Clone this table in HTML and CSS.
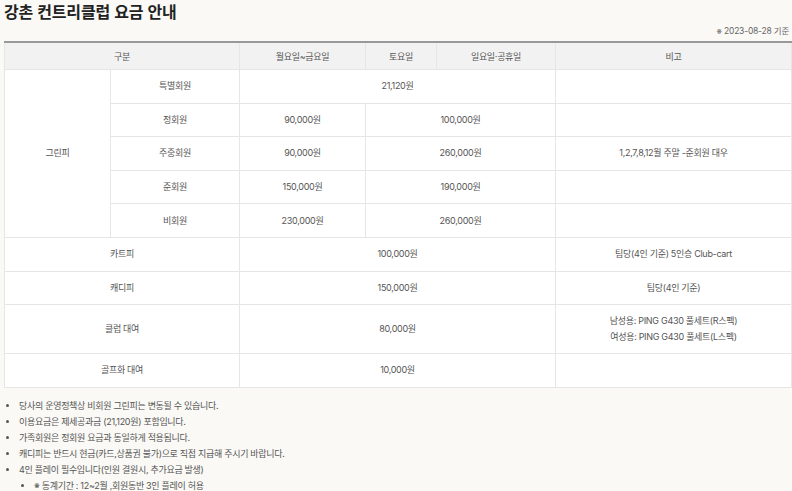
FILE: index.html
```html
<!DOCTYPE html>
<html lang="ko">
<head>
<meta charset="utf-8">
<title>강촌 컨트리클럽 요금 안내</title>
<link rel="stylesheet" href="styles.css">
</head>
<body>
<div class="page">
  <h1 class="title">강촌 컨트리클럽 요금 안내</h1>
  <p class="date">※ 2023-08-28 기준</p>
  <table class="fee">
    <colgroup>
      <col class="c1"><col class="c2"><col class="c3"><col class="c4"><col class="c5"><col class="c6">
    </colgroup>
    <thead>
      <tr>
        <th colspan="2">구분</th>
        <th>월요일~금요일</th>
        <th>토요일</th>
        <th>일요일·공휴일</th>
        <th>비고</th>
      </tr>
    </thead>
    <tbody>
      <tr>
        <td rowspan="5">그린피</td>
        <td>특별회원</td>
        <td colspan="3">21,120원</td>
        <td></td>
      </tr>
      <tr>
        <td>정회원</td>
        <td>90,000원</td>
        <td colspan="2">100,000원</td>
        <td></td>
      </tr>
      <tr>
        <td>주중회원</td>
        <td>90,000원</td>
        <td colspan="2">260,000원</td>
        <td>1,2,7,8,12월 주말 -준회원 대우</td>
      </tr>
      <tr>
        <td>준회원</td>
        <td>150,000원</td>
        <td colspan="2">190,000원</td>
        <td></td>
      </tr>
      <tr>
        <td>비회원</td>
        <td>230,000원</td>
        <td colspan="2">260,000원</td>
        <td></td>
      </tr>
      <tr>
        <td colspan="2">카트피</td>
        <td colspan="3">100,000원</td>
        <td>팀당(4인 기준) 5인승 Club-cart</td>
      </tr>
      <tr>
        <td colspan="2">캐디피</td>
        <td colspan="3">150,000원</td>
        <td>팀당(4인 기준)</td>
      </tr>
      <tr class="tall">
        <td colspan="2">클럽 대여</td>
        <td colspan="3">80,000원</td>
        <td>남성용: PING G430 풀세트(R스펙)<br>여성용: PING G430 풀세트(L스펙)</td>
      </tr>
      <tr>
        <td colspan="2">골프화 대여</td>
        <td colspan="3">10,000원</td>
        <td></td>
      </tr>
    </tbody>
  </table>
  <ul class="notes">
    <li>당사의 운영정책상 비회원 그린피는 변동될 수 있습니다.</li>
    <li>이용요금은 제세공과금 (21,120원) 포함입니다.</li>
    <li>가족회원은 정회원 요금과 동일하게 적용됩니다.</li>
    <li>캐디피는 반드시 현금(카드,상품권 불가)으로 직접 지급해 주시기 바랍니다.</li>
    <li>4인 플레이 필수입니다(인원 결원시, 추가요금 발생)
      <ul class="sub">
        <li>※ 동계기간 : 12~2월 ,회원동반 3인 플레이 허용</li>
      </ul>
    </li>
  </ul>
</div>
</body>
</html>
```

FILE: styles.css
```css
html, body {
  margin: 0;
  padding: 0;
  background: #faf9f6;
}
body {
  font-family: Inter, "Noto Sans CJK KR", "Noto Sans", sans-serif;
  color: #555;
}
.page {
  padding: 0 0 0 4px;
  width: 787px;
}
.title {
  margin: 0;
  padding-top: 1px;
  font-family: "Noto Sans CJK KR", sans-serif;
  font-size: 16px;
  line-height: 20px;
  font-weight: 700;
  color: #222;
  letter-spacing: -0.2px;
}
.date {
  margin: 4px 2px 0 0;
  text-align: right;
  font-size: 8.5px;
  line-height: 12px;
  color: #666;
  letter-spacing: -0.2px;
}
.fee {
  margin-top: 4px;
  width: 787px;
  border-collapse: collapse;
  table-layout: fixed;
  background: #fff;
  font-size: 9px;
  letter-spacing: -0.3px;
}
.c1 { width: 106px; }
.c2 { width: 129px; }
.c3 { width: 126px; }
.c4 { width: 71px; }
.c5 { width: 119px; }
.c6 { width: 236px; }
.fee th {
  background: #f2f2f2;
  font-weight: 400;
  color: #555;
  height: 26px;
  padding: 0;
  border-top: 2px solid #999;
  border-bottom: 1px solid #e6e6e6;
  border-left: 1px solid #e6e6e6;
  border-right: 1px solid #e6e6e6;
}
.fee td {
  height: 32.6px;
  padding: 0;
  text-align: center;
  border: 1px solid #e6e6e6;
  color: #555;
  line-height: 16px;
}
.fee tr.tall td {
  height: 48px;
}
.notes {
  margin: 10px 0 0 0;
  padding: 0 0 0 15px;
  font-size: 9px;
  line-height: 16px;
  letter-spacing: -0.3px;
  color: #555;
}
.notes li {
  margin: 0;
}
.notes .sub {
  margin: 0;
  padding-left: 15px;
}
.notes .sub li {
  list-style: disc;
}
```
